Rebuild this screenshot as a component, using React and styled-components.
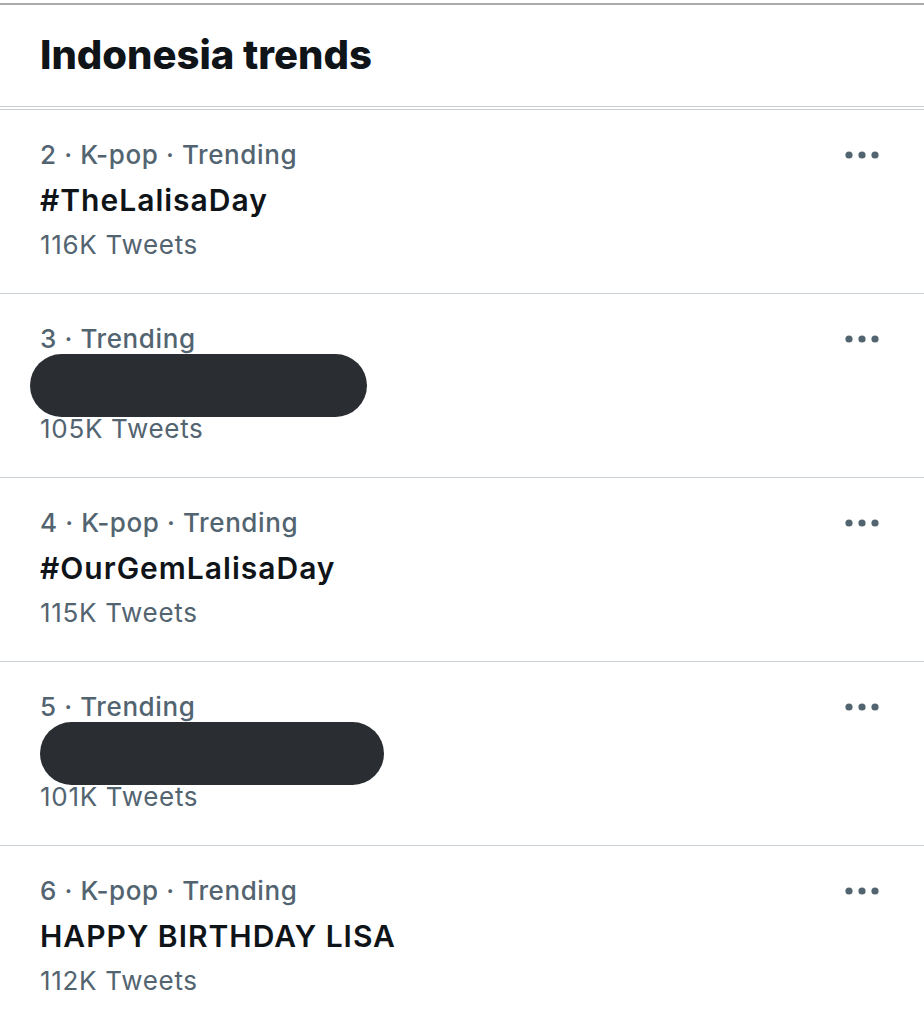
import React from 'react'
import styled, { createGlobalStyle } from 'styled-components'

const GlobalStyle = createGlobalStyle`
  body {
    margin: 0;
    background: #ffffff;
    font-family: Inter, "Noto Sans", sans-serif;
  }
`

const Panel = styled.div`
  width: 924px;
  margin-top: 3px;
  border-top: 2px solid #a9abad;
`

const Header = styled.div`
  height: 101px;
  display: flex;
  align-items: center;
  padding-left: 40px;
  border-bottom: 1px solid #c6cdd3;
`

const HeaderRule = styled.div`
  height: 2px;
  border-bottom: 1px solid #c6cdd3;
`

const Title = styled.h2`
  margin: 0 0 2px;
  font-size: 40px;
  font-weight: 800;
  color: #0f1419;
  letter-spacing: 0;
`

const Row = styled.div`
  display: flex;
  justify-content: space-between;
  padding: 23px 44px 26px 40px;
  height: 134px;
  border-bottom: 1px solid #cbd3d9;
`

const Body = styled.div`
  display: flex;
  flex-direction: column;
`

const Meta = styled.div`
  height: 44px;
  line-height: 44px;
  font-size: 26px;
  font-weight: 500;
  letter-spacing: 0.6px;
  color: #536471;
`

const Name = styled.div`
  height: 46px;
  line-height: 46px;
  font-size: 30px;
  font-weight: 600;
  letter-spacing: 1px;
  color: #0f1419;
`

const Redacted = styled.div`
  width: ${(p) => p.width}px;
  height: 63px;
  margin: -7px 0 -10px ${(p) => p.shift}px;
  border-radius: 32px;
  background: #2a2e33;
`

const Count = styled.div`
  height: 44px;
  line-height: 44px;
  font-size: 26px;
  font-weight: 400;
  letter-spacing: 0.7px;
  color: #536471;
`

const More = styled.svg`
  width: 36px;
  height: 44px;
  flex-shrink: 0;
`

const trends = [
  { rank: 2, cat: 'K-pop', name: '#TheLalisaDay', count: '116K' },
  { rank: 3, hidden: { width: 337, shift: -10 }, count: '105K' },
  { rank: 4, cat: 'K-pop', name: '#OurGemLalisaDay', count: '115K' },
  { rank: 5, hidden: { width: 344, shift: 0 }, count: '101K' },
  { rank: 6, cat: 'K-pop', name: 'HAPPY BIRTHDAY LISA', count: '112K' },
]

const Dots = () => (
  <More viewBox="0 0 36 44">
    <circle cx="5" cy="22" r="3.6" fill="#536471" />
    <circle cx="18" cy="22" r="3.6" fill="#536471" />
    <circle cx="31" cy="22" r="3.6" fill="#536471" />
  </More>
)

const App = () => (
  <>
    <GlobalStyle />
    <Panel>
      <Header>
        <Title>Indonesia trends</Title>
      </Header>
      <HeaderRule />
      {trends.map((t) => (
        <Row key={t.rank}>
          <Body>
            <Meta>
              {t.rank} · {t.cat ? `${t.cat} · ` : ''}Trending
            </Meta>
            {t.hidden ? (
              <Redacted width={t.hidden.width} shift={t.hidden.shift} />
            ) : (
              <Name>{t.name}</Name>
            )}
            <Count>{t.count} Tweets</Count>
          </Body>
          <Dots />
        </Row>
      ))}
    </Panel>
  </>
)

export default App
